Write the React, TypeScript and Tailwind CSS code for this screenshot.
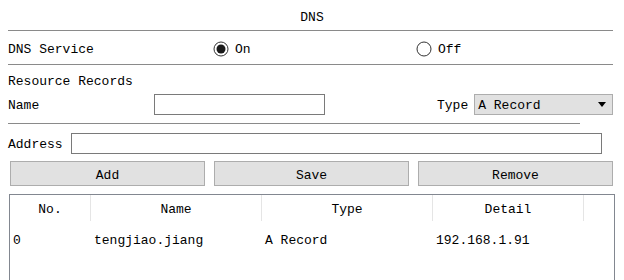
// DNS settings panel — fixed 624x280 dialog look, bitmap-style mono font

function Radio({ checked, label }: { checked: boolean; label: string }) {
  return (
    <span className="flex items-center gap-[6px]">
      <svg width="16" height="16" viewBox="0 0 16 16">
        <circle cx="8" cy="8" r="7" fill="#fff" stroke="#333" strokeWidth="1" />
        {checked && <circle cx="8" cy="8" r="4.5" fill="#1a1a1a" />}
      </svg>
      <span>{label}</span>
    </span>
  )
}

function Rule({ w = 'w-[605px]' }: { w?: string }) {
  return <div className={`ml-[8px] h-px bg-[#8a8a8a] ${w}`} />
}

const rows = [{ no: '0', name: 'tengjiao.jiang', type: 'A Record', detail: '192.168.1.91' }]

export default function App() {
  return (
    <div
      className="w-[624px] h-[280px] overflow-hidden bg-white text-[13px] leading-none text-black"
      style={{ fontFamily: '"Liberation Mono", "DejaVu Sans Mono", monospace' }}
    >
      <div className="h-[30px] flex items-center justify-center pt-[4px]">DNS</div>
      <Rule />

      <div className="h-[33px] flex items-center pl-[8px] pt-[3px]">
        <span className="w-[205px]">DNS Service</span>
        <div className="w-[203px]">
          <Radio checked label="On" />
        </div>
        <Radio checked={false} label="Off" />
      </div>
      <Rule />

      <div className="h-[29px] flex items-center pl-[8px] pt-[4px]">Resource Records</div>

      <div className="h-[21px] flex items-center pl-[8px]">
        <span className="w-[146px] pt-[1px]">Name</span>
        <div className="w-[171px] h-[21px] border border-[#7a7a7a] bg-white" />
        <span className="ml-[112px] mr-[6px] pt-[1px]">Type</span>
        <div className="w-[139px] h-[21px] border border-[#adadad] bg-[#e1e1e1] flex items-center justify-between pl-[3px] pr-[6px]">
          <span className="pt-[1px]">A Record</span>
          <svg width="8" height="5" viewBox="0 0 8 5">
            <path d="M0 0h8L4 5z" fill="#000" />
          </svg>
        </div>
      </div>

      <div className="h-[8px]" />
      <Rule w="w-[572px]" />

      <div className="mt-[9px] h-[21px] flex items-center pl-[8px]">
        <span className="w-[63px] pt-[1px]">Address</span>
        <div className="w-[531px] h-[21px] border border-[#7a7a7a] bg-white" />
      </div>

      <div className="mt-[7px] flex gap-[9px] pl-[10px]">
        {['Add', 'Save', 'Remove'].map((b) => (
          <button
            key={b}
            className="w-[195px] h-[25px] border border-[#adadad] bg-[#e1e1e1] flex items-center justify-center pt-[3px]"
          >
            {b}
          </button>
        ))}
      </div>

      <div className="mt-[8px] ml-[9px] w-[606px] h-[100px] border border-b-0 border-[#828790] bg-white">
        <div className="flex h-[26px] items-center">
          <div className="w-[81px] h-full flex items-center justify-center pt-[2px] border-r border-[#e5e5e5]">No.</div>
          <div className="w-[171px] h-full flex items-center justify-center pt-[2px] border-r border-[#e5e5e5]">Name</div>
          <div className="w-[171px] h-full flex items-center justify-center pt-[2px] border-r border-[#e5e5e5]">Type</div>
          <div className="w-[151px] h-full flex items-center justify-center pt-[2px] border-r border-[#e5e5e5]">Detail</div>
        </div>
        {rows.map((r) => (
          <div key={r.no} className="flex h-[38px] items-center">
            <div className="w-[81px] pl-[3px]">{r.no}</div>
            <div className="w-[171px] pl-[3px]">{r.name}</div>
            <div className="w-[171px] pl-[3px]">{r.type}</div>
            <div className="w-[151px] pl-[3px]">{r.detail}</div>
          </div>
        ))}
      </div>
    </div>
  )
}
